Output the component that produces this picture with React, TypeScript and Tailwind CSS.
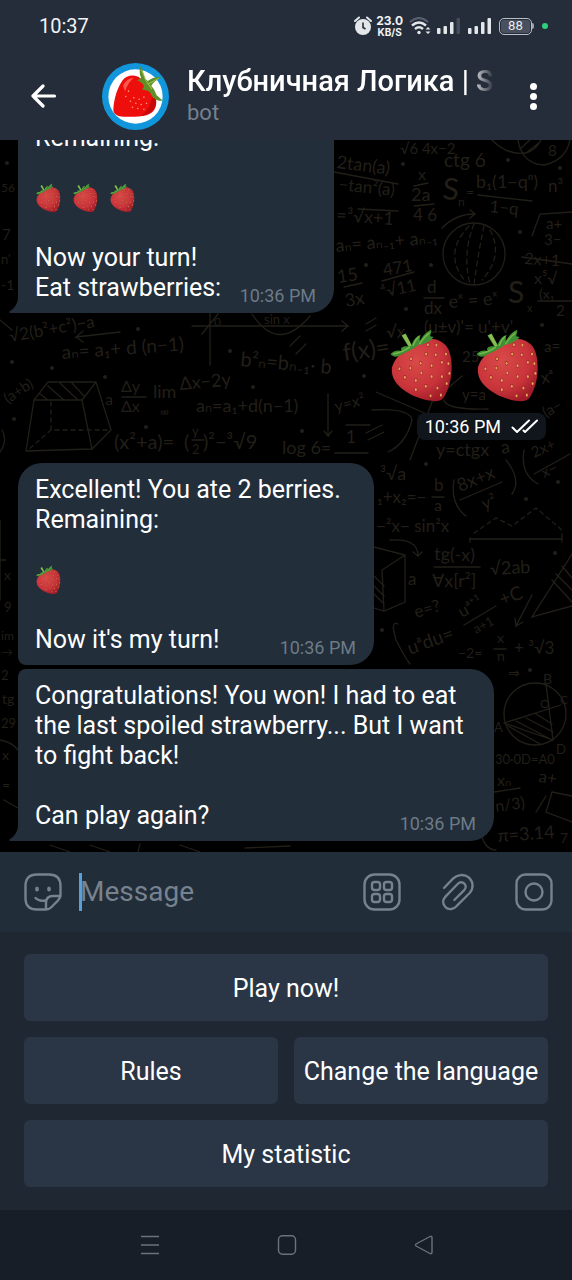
import React from "react";

const SEEDS = [
  [292, 104], [320, 106], [350, 104], [248, 118], [276, 131], [308, 138], [338, 128], [357, 132],
  [214, 147], [246, 145], [278, 159], [308, 170], [338, 170], [360, 160], [230, 172], [262, 181],
  [291, 198], [325, 203], [352, 190], [262, 208], [305, 226], [335, 224], [297, 77], [322, 78],
];

function Strawberry({ className }: { className: string }) {
  return (
    <svg viewBox="188 31 184 216" className={className} aria-label="strawberry" role="img">
      <defs>
        <radialGradient id="berry" cx="0.4" cy="0.35" r="0.7">
          <stop offset="0" stopColor="#d94a49" />
          <stop offset="0.65" stopColor="#c9343a" />
          <stop offset="1" stopColor="#9f1c28" />
        </radialGradient>
      </defs>
      <path
        d="M192 152C192 122 226 90 272 66C300 54 338 58 356 88C372 120 372 188 343 232C334 246 304 244 270 232C228 216 192 188 192 152Z"
        fill="url(#berry)"
      />
      <path
        d="M188 104C198 94 212 92 222 96C214 88 222 80 240 82L220 50L232 44L250 78C254 64 264 52 276 48C272 58 274 62 274 66C282 50 294 38 307 33C308 40 304 46 304 52L314 54C302 70 284 74 270 78C252 92 232 100 212 110C204 114 194 112 188 104Z"
        fill="#3f8f35"
      />
      <path d="M222 50L232 45L250 80L242 82Z" fill="#8dbb52" />
      <path d="M196 104Q222 100 244 84M254 80Q260 62 272 52M272 76Q286 54 302 42" stroke="#79b84a" strokeWidth="4" fill="none" />
      {SEEDS.map(([x, y]) => (
        <g key={`${x}-${y}`}>
          <ellipse cx={x} cy={y} rx="4.5" ry="6.5" fill="#9a2228" />
          <ellipse cx={x} cy={y} rx="3" ry="4.5" fill="#e6a258" />
        </g>
      ))}
    </svg>
  );
}

function Avatar() {
  return (
    <svg viewBox="305 188 200 200" className="size-[67px] shrink-0" role="img" aria-label="Bot avatar">
      <circle cx="405" cy="288" r="100" fill="#1296db" />
      <circle cx="405" cy="288" r="81" fill="#fff" />
      <path
        d="M339 324C341 296 350 262 366 240C378 224 404 220 420 234C442 248 460 270 466 294C470 318 462 336 438 344C412 350 376 350 354 346C342 342 338 334 339 324Z"
        fill="#ee0f0d"
      />
      <path d="M368 256Q378 234 400 232Q382 246 374 272Z" fill="#ff5b4d" />
      <path d="M466 296C470 326 450 340 422 346C442 330 450 316 454 292Z" fill="#c90808" />
      {[[400, 292], [416, 296], [430, 290], [406, 308], [422, 312], [438, 308], [390, 302], [412, 324], [430, 326], [396, 320], [376, 288], [384, 272]].map(([x, y]) => (
        <circle key={`${x}-${y}`} cx={x} cy={y} r="2.4" fill="#ff9a7a" />
      ))}
      <path
        d="M422 194L427 214L433 234L442 242C454 232 468 228 482 230C470 238 458 246 452 256C460 264 464 274 468 284L486 300C472 303 456 294 450 278C444 268 434 270 424 266C430 262 432 258 426 250C420 244 414 240 410 240L422 232C416 222 416 208 422 194Z"
        fill="#5f8f26"
      />
      <path d="M423 208L436 240L454 266M444 250L474 234" stroke="#9cc04d" strokeWidth="3" fill="none" />
    </svg>
  );
}

type Note = [number, number, number, string, number?];

const NOTES: Note[] = [
  [336, 168, 18, "2tan(a)", 7], [338, 190, 17, "−tan²(a)", 6], [444, 167, 19, "ctg 6"], [418, 180, 16, "x"],
  [411, 201, 18, "2a"], [413, 221, 17, "4 6"], [442, 199, 30, "S", 4], [458, 206, 12, "n"], [466, 197, 14, "="],
  [476, 188, 18, "b₁(1−qⁿ)"], [489, 212, 17, "1−q", 6], [548, 192, 17, "n³"], [336, 221, 18, "=³√x+1", 4],
  [336, 252, 18, "aₙ= aₙ₋₁+ aₙ₋₁", -5], [338, 283, 18, "15", -8], [346, 307, 18, "3x", -10], [384, 276, 17, "471", -10],
  [382, 298, 17, "⁴√11", -12], [427, 293, 17, "d"], [424, 314, 17, "dx"], [449, 308, 18, "eˣ = eˣ", -4],
  [508, 303, 30, "S"], [527, 312, 11, "x"], [546, 229, 15, "a+"], [544, 245, 15, "3−"], [524, 264, 16, "2x+1", 4],
  [534, 284, 16, "x⁵√"], [539, 299, 14, "(x₁"], [556, 316, 15, "2"], [400, 154, 15, "√6  4x−2"], [548, 156, 15, "8"],
  [344, 361, 24, "f(x)=", -8], [386, 338, 17, "√x"], [424, 333, 17, "(u±v)'= u'+v'"], [462, 362, 15, "25"], [544, 352, 15, "a="],
  [336, 412, 16, "y=x²", -14], [462, 400, 15, "y=a"], [542, 384, 17, "xᵃ", -12], [546, 418, 15, "(a−", -30],
  [346, 443, 17, "1"], [436, 456, 18, "y=ctgx"], [502, 454, 18, "a", -12], [534, 458, 15, "2x+", -24], [544, 478, 15, "x−", -24],
  [380, 480, 18, "³√a"], [377, 503, 17, "₁+x₂=−"], [434, 491, 17, "b"], [434, 511, 16, "a"], [460, 492, 18, "8x+x", -22], [484, 510, 17, "y²", -20],
  [376, 532, 17, "−²x− sin²x"], [434, 560, 18, "tg(-x)", 2], [432, 587, 18, "∀x[r²]"], [490, 575, 18, "√2ab", -3], [408, 585, 17, "a"],
  [416, 618, 17, "e=?", -16], [410, 655, 19, "uᵃdu=", -20], [462, 618, 17, "uᵃ⁺¹", -30], [476, 634, 13, "a+1", -28], [502, 606, 19, "+C", -20],
  [458, 658, 14, "−2="], [497, 643, 14, "x"], [497, 661, 14, "n"], [514, 654, 17, "+ ³√3"], [508, 678, 14, "⇒"],
  [543, 684, 14, "B"], [494, 732, 13, "A"], [540, 708, 12, "O"], [560, 704, 12, "C"], [556, 754, 13, "D"],
  [495, 764, 13, "30·0D=A0"], [538, 782, 17, "a+", 8], [497, 786, 16, "xₙ"], [496, 812, 16, "n/3)", -8], [498, 842, 18, "π=3.14", -4], [560, 843, 14, "7"],
  [10, 342, 17, "√2(b²+c²)−a", -10], [62, 359, 19, "aₙ= a₁+ d (n−1)", -4], [240, 366, 20, "b²ₙ=bₙ₋₁· b", 5],
  [8, 404, 15, "(a+b)", -34], [121, 392, 16, "Δy"], [121, 412, 16, "Δx"], [105, 405, 16, "a"], [153, 398, 18, "lim"], [160, 416, 12, "∞"],
  [180, 390, 18, "Δx−2y", -5], [196, 412, 18, "aₙ=a₁+d(n−1)"], [114, 449, 20, "(x²+a)="],
  [184, 449, 20, "("], [192, 436, 13, "y"], [192, 454, 13, "2"], [203, 449, 20, ")²−³√9"], [282, 454, 18, "log 6="], [214, 326, 12, "0"], [264, 324, 13, "sin x"],
  [1, 192, 12, "56"], [2, 240, 15, "7"], [1, 264, 13, "n'"], [1, 290, 14, "-1"], [4, 580, 14, "x"], [4, 612, 13, "9"],
  [1, 640, 12, "im"], [1, 656, 12, "→"], [1, 680, 13, "2"], [2, 704, 14, "tg"], [1, 728, 13, "29"], [2, 760, 14, "x"], [2, 790, 14, "="],
];

function Wallpaper() {
  return (
    <svg
      viewBox="0 140 572 712"
      preserveAspectRatio="xMidYMid slice"
      className="absolute inset-0 size-full"
      aria-hidden="true"
    >
      <g fill="#221f18" fontFamily="Lato, 'DejaVu Sans', sans-serif">
        {NOTES.map(([x, y, size, text, turn]) => (
          <text key={`${x}-${y}`} x={x} y={y} fontSize={size} transform={turn ? `rotate(${turn} ${x} ${y})` : undefined}>
            {text}
          </text>
        ))}
      </g>
      <g stroke="#221f18" strokeWidth="1.3" fill="none" strokeLinecap="round">
        <circle cx="474" cy="254" r="31" />
        <path d="M469 226Q442 254 466 282M474 224Q462 254 470 284M484 226Q478 254 474 284M490 230Q504 256 482 280" strokeDasharray="5 4" />
        <path d="M442 228Q456 214 474 214M470 210L475 214L470 218M478 195L532 201M522 257L572 264M414 186L428 183M414 206L434 204M334 172L398 184M358 209L398 211M344 287L362 283M382 281L414 272M424 298H444M538 301H572" />
        <path d="M532 236L540 214L572 212M492 140Q508 156 526 153Q536 150 541 140M518 140Q522 164 544 165Q566 160 570 140M520 149L530 140M526 153L540 142" />
        <path d="M26 451L34 400L48 382H96L111 430L92 449L26 451M34 400H82L92 449M82 400L96 382M40 394L48 400M48 386L64 400M60 383L78 400M72 383L84 396" />
        <path d="M51 402V430L110 430M51 430L28 450" strokeDasharray="4 4" />
        <path d="M192 326L348 326L342 321M348 326L342 331M210 365V313M202 334L218 314M252 314Q278 354 310 316M120 332L76 337L83 331M76 337L83 342M122 397H146M192 440H204M328 394V436L324 431M328 436L332 431M335 453H368" />
        <path d="M366 324L376 318M366 331L376 325M290 346L300 336M296 354L306 344M366 433L382 425M368 440L384 432M376 392L436 418M372 410Q410 408 412 420Q406 444 388 452M410 460L432 402L462 376M444 400Q446 410 488 409M346 425H370" />
        <path d="M454 480Q450 504 466 516M460 500L502 482M506 460Q522 480 512 494M524 450Q520 474 538 484M534 474L570 454M432 497H444M470 538V542M470 539H562M562 534V542" />
        <path d="M474 533L496 518L512 526L536 508L562 530" strokeDasharray="4 4" />
        <path d="M374 547L405 555V602L384 611L374 608M405 555L382 570L384 611M374 586L384 596M374 594L384 604M374 576L384 586M390 540Q418 538 418 556L413 552M418 556L422 552" />
        <path d="M434 567H480M572 554L532 617L572 606M552 580L572 602M556 574L572 590M562 566L572 578M532 595L516 626L515 618M516 626L523 622M464 625L496 606M398 624Q390 620 396 640Q404 656 410 664M494 649H506" />
        <circle cx="535" cy="714" r="31" />
        <path d="M504 723L561 705M546 684L553 740L504 723M508 726L540 744M516 721L552 740M526 718L553 732M536 714L552 724M494 792L520 788M546 796L536 812M552 792L546 812L572 822M552 792L572 796M480 830Q484 850 496 850" />
        <path d="M0 520V600M6 560H0M0 320L12 330M0 452Q8 440 2 430M0 740Q12 742 18 750M4 800L18 808M50 845L70 852M90 845L110 852M140 844L138 852M180 845L200 852M245 848L290 846" />
      </g>
      <g fill="#221f18">
        {[[403, 164], [508, 160], [560, 168], [520, 232], [366, 265], [431, 265], [406, 309], [138, 329], [230, 351], [253, 387], [105, 377], [52, 368], [12, 362], [14, 419], [146, 427], [302, 431], [364, 376], [426, 464], [542, 325], [526, 499], [555, 553], [382, 630], [530, 670], [7, 163], [558, 482]].map(([x, y]) => (
          <circle key={`${x}-${y}`} cx={x} cy={y} r="2" />
        ))}
      </g>
    </svg>
  );
}

function Tail() {
  return (
    <svg viewBox="0 0 12 22" className="absolute bottom-0 -left-[9px] h-[22px] w-3" aria-hidden="true">
      <path d="M9 0V6C9 12 6 17 1 20C0 21 0 22 1 22H12V0Z" fill="#222e3a" />
    </svg>
  );
}

function Bubble({ className, tail, last, children }: { className: string; tail?: boolean; last: string; children: React.ReactNode }) {
  return (
    <article className={`relative ml-[18px] max-w-full shrink-0 bg-[#222e3a] pt-3 pr-[18px] pb-2.5 pl-[17px] text-[25px] leading-[30px] text-white ${className}`}>
      {tail && <Tail />}
      {children}
      <div className="flex items-end justify-between gap-3">
        <p>{last}</p>
        <time className="-mb-1 text-lg leading-[22px] text-[#6d7a87]">10:36 PM</time>
      </div>
    </article>
  );
}

function Berries({ count }: { count: number }) {
  return (
    <div className="my-[30px] flex h-[30px] items-center gap-3 pl-px">
      {Array.from({ length: count }, (_, i) => (
        <Strawberry key={i} className="h-[30px] w-[25px]" />
      ))}
    </div>
  );
}

function StatusBar() {
  return (
    <div className="flex h-[52px] items-center justify-between pr-6 pl-[39px] text-[#f1f3f5]">
      <time className="text-xl">10:37</time>
      <div className="flex items-center">
        <svg viewBox="0 0 18 20" className="mr-1 h-5 w-[18px]" aria-label="Alarm">
          <circle cx="9" cy="11" r="8" fill="#e4e7ea" />
          <path d="M1 5L5 1.500M17 5L13 1.500" stroke="#e4e7ea" strokeWidth="2" strokeLinecap="round" />
          <path d="M9 6.500V11.500L11.500 13" stroke="#252d3a" strokeWidth="1.600" fill="none" />
        </svg>
        <div className="mr-1.5 text-center font-[Inter] font-bold">
          <div className="text-xs leading-3">23.0</div>
          <div className="text-[10px] leading-[10px]">KB/S</div>
        </div>
        <svg viewBox="0 0 22 18" className="mr-1.5 h-[18px] w-[22px]" fill="none" aria-label="Wi-Fi">
          <path d="M1 5Q10 -3 19 5" stroke="#596170" strokeWidth="2" />
          <path d="M3 8.500Q10 2.500 17 8.500M6 12Q10 8.500 14 12" stroke="#e4e7ea" strokeWidth="2.400" />
          <circle cx="10" cy="15.500" r="1.700" fill="#e4e7ea" />
          <path d="M16.500 12.500L19 10L21.500 12.500ZM16.500 14.500L19 17L21.500 14.500Z" fill="#e4e7ea" />
        </svg>
        <svg viewBox="0 0 24 16" className="mr-[7px] h-4 w-6" fill="#e4e7ea" aria-label="Signal">
          <rect x="0" y="10" width="3.500" height="6" rx="1" />
          <rect x="6.500" y="8" width="3.500" height="8" rx="1" />
          <rect x="13" y="4" width="3.500" height="12" rx="1" />
          <rect x="19.500" y="0" width="3.500" height="16" rx="1" fill="#454d5a" />
        </svg>
        <svg viewBox="0 0 24 16" className="mr-[7px] h-4 w-6" fill="#e4e7ea" aria-label="Signal">
          <rect x="0" y="10" width="3.500" height="6" rx="1" />
          <rect x="6.500" y="8" width="3.500" height="8" rx="1" />
          <rect x="13" y="4" width="3.500" height="12" rx="1" />
          <rect x="19.500" y="0" width="3.500" height="16" rx="1" />
        </svg>
        <div className="flex h-[17px] w-[33px] items-center justify-center rounded-[5px] border border-[#b9bec5] p-px">
          <div className="flex size-full items-center justify-center rounded-[3px] bg-[#49515e] font-[Inter] text-xs leading-none">88</div>
        </div>
        <div className="mr-2 h-1.5 w-0.5 rounded-r bg-[#9aa0a8]" />
        <div className="size-1.5 rounded-full bg-[#2fd07d]" />
      </div>
    </div>
  );
}

export default function App() {
  return (
    <div className="flex h-screen flex-col overflow-hidden bg-black font-[Roboto,sans-serif]">
      <header className="h-[140px] shrink-0 bg-[#252d3a]">
        <StatusBar />
        <div className="flex h-[88px] items-center justify-between pr-[23px] pl-[30px]">
          <button aria-label="Back" className="mr-[45px] shrink-0 text-white">
            <svg viewBox="0 0 27 24" className="h-6 w-[27px]" fill="none" stroke="currentColor" strokeWidth="3.200" strokeLinecap="round" strokeLinejoin="round">
              <path d="M24.500 12H3M13 2L3 12L13 22" />
            </svg>
          </button>
          <Avatar />
          <div className="mr-auto ml-[18px] min-w-0 pt-0.5">
            <h1 className="w-fit max-w-full overflow-hidden text-[29px] leading-8 font-medium whitespace-nowrap text-white [mask-image:linear-gradient(to_right,black_calc(100%-24px),transparent)]">
              Клубничная Логика | S
            </h1>
            <p className="text-[22px] leading-8 text-[#76808d]">bot</p>
          </div>
          <button aria-label="Menu" className="flex w-8 shrink-0 flex-col items-center gap-[3px]">
            <span className="size-[7px] rounded-full bg-white" />
            <span className="size-[7px] rounded-full bg-white" />
            <span className="size-[7px] rounded-full bg-white" />
          </button>
        </div>
      </header>

      <main className="relative flex min-h-0 flex-1 flex-col justify-end overflow-hidden bg-black pb-[11px]">
        <Wallpaper />
        <Bubble className="w-[316px] rounded-t-3xl rounded-br-3xl" tail last="Eat strawberries:">
          <p>Remaining:</p>
          <Berries count={3} />
          <p>Now your turn!</p>
        </Bubble>

        <div className="relative mt-[16px] mr-[26px] mb-[23px] flex shrink-0 flex-col items-end gap-2.5">
          <div className="flex gap-[22px] pr-[6px]">
            <Strawberry className="h-[74px] w-16" />
            <Strawberry className="h-[74px] w-16" />
          </div>
          <div className="flex h-[27px] items-center gap-2.5 rounded-lg bg-[#10161c] px-2 text-white">
            <time className="text-lg">10:36 PM</time>
            <svg viewBox="0 0 27 15" className="h-[15px] w-[27px]" fill="none" stroke="currentColor" strokeWidth="2" strokeLinecap="round" strokeLinejoin="round" aria-label="Read">
              <path d="M1.500 8.500L6 13L18 1.500M12.500 11.500L14 13L26 1.500" />
            </svg>
          </div>
        </div>

        <Bubble className="mb-1 w-[356px] rounded-3xl rounded-bl-lg" last="Now it's my turn!">
          <p>Excellent! You ate 2 berries.</p>
          <p>Remaining:</p>
          <Berries count={1} />
        </Bubble>

        <Bubble className="w-[476px] rounded-tl-lg rounded-r-3xl" tail last="Can play again?">
          <p className="mb-[30px]">Congratulations! You won! I had to eat the last spoiled strawberry... But I want to fight back!</p>
        </Bubble>
      </main>

      <form className="flex h-20 shrink-0 items-center bg-[#222d3a] pr-[19px] pl-6 text-[#77828f]" onSubmit={(e) => e.preventDefault()}>
        <button type="button" aria-label="Stickers" className="shrink-0">
          <svg viewBox="0 0 38 38" className="size-[38px]" fill="none" stroke="currentColor" strokeWidth="2.400" strokeLinecap="round" strokeLinejoin="round">
            <path d="M22 36.500H13Q1.500 36.500 1.500 25V13Q1.500 1.500 13 1.500H25Q36.500 1.500 36.500 13V22Q36.500 25 34 27.500L27 34.500Q25 36.500 22 36.500V30Q22 23 29 23H36.500M11.500 25Q15 28.500 21 27.500" />
            <ellipse cx="13" cy="16" rx="1.200" ry="1.800" fill="currentColor" strokeWidth="1.400" />
            <ellipse cx="25" cy="16" rx="1.200" ry="1.800" fill="currentColor" strokeWidth="1.400" />
          </svg>
        </button>
        <span className="ml-[17px] h-[38px] w-[3px] shrink-0 bg-[#5a9fd8]" />
        <input
          aria-label="Message"
          placeholder="Message"
          className="-ml-0.5 min-w-0 flex-1 bg-transparent text-[28px] leading-9 text-white outline-none placeholder:text-[#77828f]"
        />
        <div className="flex shrink-0 items-center gap-[38px]">
          <button type="button" aria-label="Bot keyboard">
            <svg viewBox="0 0 38 38" className="size-[38px]" fill="none" stroke="currentColor" strokeWidth="2.400">
              <rect x="1.500" y="1.500" width="35" height="35" rx="10" />
              <rect x="9" y="9" width="8" height="8" rx="2.500" />
              <rect x="21" y="9" width="8" height="8" rx="2.500" />
              <rect x="9" y="21" width="8" height="8" rx="2.500" />
              <rect x="21" y="21" width="8" height="8" rx="2.500" />
            </svg>
          </button>
          <button type="button" aria-label="Attach">
            <svg viewBox="296 70 114 114" className="size-[38px]" fill="none" stroke="currentColor" strokeWidth="7" strokeLinecap="round" strokeLinejoin="round">
              <path d="M311 115L338 87C350 74 372 72 386 84C400 98 400 116 388 130L350 168C340 179 326 182 316 173C306 164 306 150 316 140L352 103C358 97 366 96 372 102C378 108 377 116 371 122L342 151" />
            </svg>
          </button>
          <button type="button" aria-label="Camera">
            <svg viewBox="0 0 38 38" className="size-[38px]" fill="none" stroke="currentColor" strokeWidth="2.400">
              <rect x="1.500" y="1.500" width="35" height="35" rx="9" />
              <circle cx="19" cy="19" r="8.500" />
            </svg>
          </button>
        </div>
      </form>

      <section className="grid shrink-0 grid-cols-2 gap-4 bg-[#1e2732] px-6 pt-[22px] pb-[23px] text-[25px] text-white">
        <button className="col-span-2 h-[67px] rounded-md bg-[#2a3645] pt-0.5">Play now!</button>
        <button className="h-[67px] rounded-md bg-[#2a3645] pt-0.5">Rules</button>
        <button className="h-[67px] rounded-md bg-[#2a3645] pt-0.5 whitespace-nowrap">Change the language</button>
        <button className="col-span-2 h-[67px] rounded-md bg-[#2a3645] pt-0.5">My statistic</button>
      </section>

      <nav className="flex h-[70px] shrink-0 items-center justify-center gap-[117px] bg-[#171e27] pl-[2px] text-[#6b727b]">
        <button aria-label="Recent apps">
          <svg viewBox="0 0 20 20" className="size-5" fill="none" stroke="currentColor" strokeWidth="1.500">
            <path d="M1 1.500H19M1 10H19M1 18.500H19" />
          </svg>
        </button>
        <button aria-label="Home">
          <svg viewBox="0 0 20 20" className="size-5" fill="none" stroke="currentColor" strokeWidth="1.400">
            <rect x="1.500" y="0.800" width="17" height="18.400" rx="4" />
          </svg>
        </button>
        <button aria-label="Back">
          <svg viewBox="0 0 20 20" className="size-5" fill="none" stroke="currentColor" strokeWidth="1.400" strokeLinejoin="round">
            <path d="M2 9Q1 10 2 11L16 18.500Q18 19 18 17.500V2.500Q18 1 16 1.500Z" />
          </svg>
        </button>
      </nav>
    </div>
  );
}
